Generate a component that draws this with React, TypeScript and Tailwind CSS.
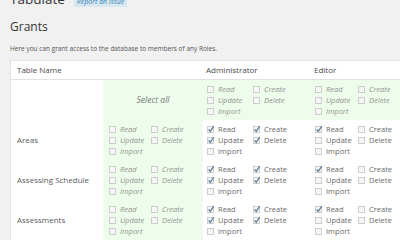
import React from "react";

type Perm = { read: boolean; create: boolean; update: boolean; del: boolean; imp: boolean };

const none: Perm = { read: false, create: false, update: false, del: false, imp: false };
const full: Perm = { read: true, create: true, update: true, del: true, imp: false };
const readOnly: Perm = { read: true, create: false, update: false, del: false, imp: false };

const rows = [
  { name: "Areas", admin: full, editor: readOnly },
  { name: "Assessing Schedule", admin: full, editor: readOnly },
  { name: "Assessments", admin: full, editor: readOnly },
];

function Box({ checked }: { checked: boolean }) {
  return (
    <span className="relative inline-block w-[7px] h-[7px] shrink-0 border border-[#cdcdcd] bg-[#f6f6f6]">
      {checked && (
        <svg viewBox="0 0 10 10" className="absolute left-[-1px] top-[-2px] w-[8px] h-[8px]">
          <path d="M2 5.5 L4 8 L8.5 1.5" fill="none" stroke="#5d7b98" strokeWidth="1.5" />
        </svg>
      )}
    </span>
  );
}

function Item({ label, checked, italic }: { label: string; checked: boolean; italic: boolean }) {
  return (
    <div className="flex items-center gap-[4px] h-[11px]">
      <Box checked={checked} />
      <span className={italic ? "italic text-[#939393]" : "text-[#6a6a6a]"}>{label}</span>
    </div>
  );
}

function Perms({ p, italic, col }: { p: Perm; italic: boolean; col: string }) {
  return (
    <div className={`grid ${col} text-[7.5px] leading-[11px]`}>
      <Item label="Read" checked={p.read} italic={italic} />
      <Item label="Create" checked={p.create} italic={italic} />
      <Item label="Update" checked={p.update} italic={italic} />
      <Item label="Delete" checked={p.del} italic={italic} />
      <Item label="Import" checked={p.imp} italic={italic} />
    </div>
  );
}

export default function App() {
  return (
    <div
      className="w-[400px] h-[240px] overflow-hidden bg-[#f1f1f1] pl-[10px]"
      style={{ fontFamily: '"Open Sans", "Liberation Sans", sans-serif' }}
    >
      <div className="flex items-end gap-[9px] mt-[-8px] h-[14px]">
        <span className="text-[13.5px] leading-[14px] text-[#333]">Tabulate</span>
        <span className="bg-[#d8e8f1] px-[3px] text-[7px] leading-[11px] italic text-[#3a86b5] mb-[-1px]">
          Report an issue
        </span>
      </div>
      <h2 className="mt-[15px] text-[12px] leading-[12px] text-[#333]">Grants</h2>
      <p className="mt-[11px] text-[6.5px] leading-[10px] text-[#555]">
        Here you can grant access to the database to members of any Roles.
      </p>
      <div className="mt-[6px] w-[420px] bg-white border-t border-l border-[#e3e3e3]">
        <div className="grid grid-cols-[92px_100px_107px_1fr] h-[19px] items-center border-b border-[#e1e1e1] text-[8px] text-[#4a4a4a]">
          <div className="pl-[6px]">Table Name</div>
          <div />
          <div className="pl-[3px]">Administrator</div>
          <div className="pl-[4px]">Editor</div>
        </div>
        <div className="grid grid-cols-[92px_100px_107px_1fr] h-[40px]">
          <div />
          <div className="bg-[#eefcec] flex items-center justify-center italic text-[8.5px] text-[#7a7a7a]">
            Select all
          </div>
          <div className="bg-[#eefcec] flex items-center pl-[4px]">
            <Perms p={none} italic col="grid-cols-[46px_auto]" />
          </div>
          <div className="bg-[#eefcec] flex items-center pl-[5px]">
            <Perms p={none} italic col="grid-cols-[43px_auto]" />
          </div>
        </div>
        {rows.map((r) => (
          <div key={r.name} className="grid grid-cols-[92px_100px_107px_1fr] h-[40px]">
            <div className="flex items-center pl-[6px] text-[8px] text-[#5a5a5a]">{r.name}</div>
            <div className="bg-[#eefcec] flex items-center pl-[6px]">
              <Perms p={none} italic col="grid-cols-[42px_auto]" />
            </div>
            <div className="flex items-center pl-[4px]">
              <Perms p={r.admin} italic={false} col="grid-cols-[46px_auto]" />
            </div>
            <div className="flex items-center pl-[5px]">
              <Perms p={r.editor} italic={false} col="grid-cols-[43px_auto]" />
            </div>
          </div>
        ))}
      </div>
    </div>
  );
}
